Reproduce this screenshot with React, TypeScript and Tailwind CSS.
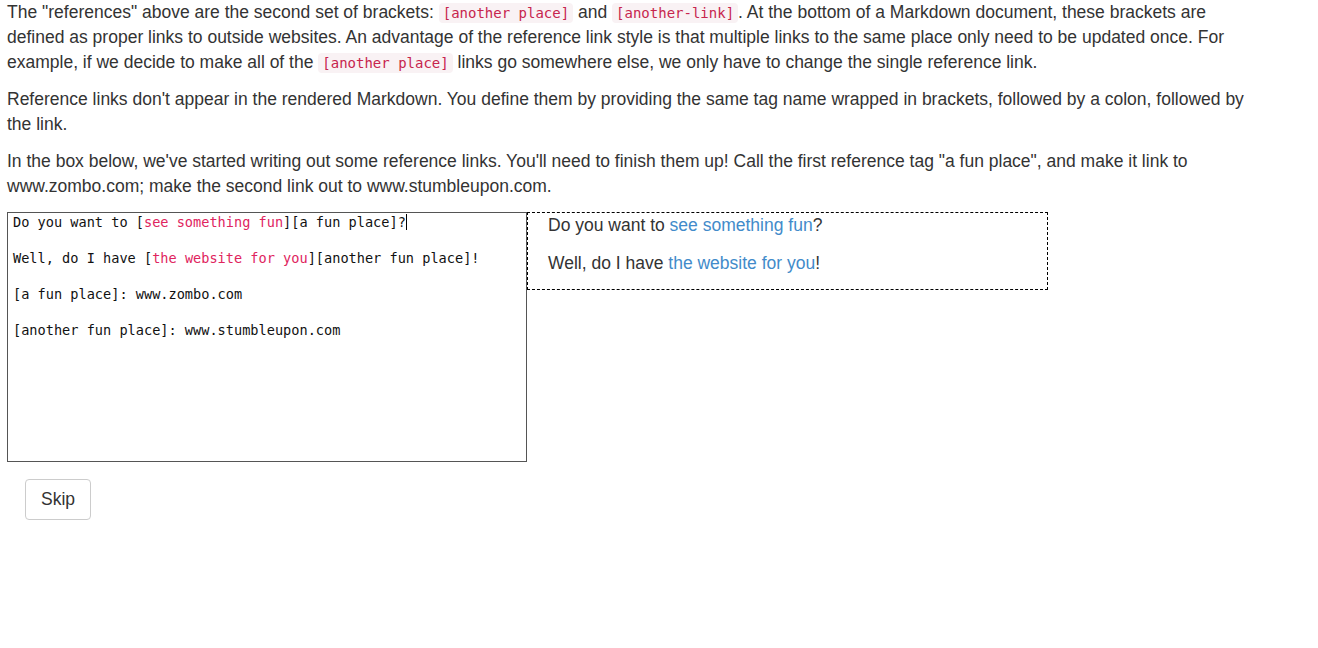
import React from "react";

const Code = ({ children }: { children: React.ReactNode }) => (
  <code className="rounded px-[4px] py-[2px] bg-[#f9f2f4] text-[#c7254e] text-[14px] leading-[16px] [font-family:'DejaVu_Sans_Mono',monospace]">
    {children}
  </code>
);

export default function App() {
  return (
    <div className="min-h-[648px] bg-white text-[#333] text-[17.5px] leading-[25px] [font-family:'Liberation_Sans',Arial,sans-serif]">
      <div className="w-[1257px] pl-[7px]">
        {/* Instructions */}
        <p className="mb-[12px]">
          The "references" above are the second set of brackets: <Code>[another place]</Code> and{" "}
          <Code>[another-link]</Code>. At the bottom of a Markdown document, these brackets are defined as proper
          links to outside websites. An advantage of the reference link style is that multiple links to the same place
          only need to be updated once. For example, if we decide to make all of the <Code>[another place]</Code> links
          go somewhere else, we only have to change the single reference link.
        </p>
        <p className="mb-[12px]">
          Reference links don't appear in the rendered Markdown. You define them by providing the same tag name wrapped
          in brackets, followed by a colon, followed by the link.
        </p>
        <p className="mb-[13px]">
          In the box below, we've started writing out some reference links. You'll need to finish them up! Call the
          first reference tag "a fun place", and make it link to www.zombo.com; make the second link out to
          www.stumbleupon.com.
        </p>
      </div>

      {/* Editor + preview */}
      <div className="flex items-start pl-[7px]">
        <div className="w-[520px] h-[250px] border border-[#555] px-[5px] text-[13.6px] leading-[18px] text-[#111] [font-family:'DejaVu_Sans_Mono',monospace]">
          <div className="flex items-center">
            <span>
              Do you want to [<span className="text-[#e0245e]">see something fun</span>][a fun place]?
            </span>
            <span className="inline-block w-[1px] h-[16px] bg-black" />
          </div>
          <div className="h-[18px]" />
          <div>
            Well, do I have [<span className="text-[#e0245e]">the website for you</span>][another fun place]!
          </div>
          <div className="h-[18px]" />
          <div>[a fun place]: www.zombo.com</div>
          <div className="h-[18px]" />
          <div>[another fun place]: www.stumbleupon.com</div>
        </div>
        <div className="w-[521px] h-[78px] border border-dashed border-black px-[20px] text-[17.5px] leading-[24px]">
          <p className="mb-[14px]">
            Do you want to <a className="text-[#428bca]">see something fun</a>?
          </p>
          <p>
            Well, do I have <a className="text-[#428bca]">the website for you</a>!
          </p>
        </div>
      </div>

      <div className="pl-[25px] pt-[17px]">
        <button className="rounded border border-[#ccc] bg-white px-[15px] py-[8px] text-[17.5px] leading-[23px] text-[#333]">
          Skip
        </button>
      </div>
    </div>
  );
}
